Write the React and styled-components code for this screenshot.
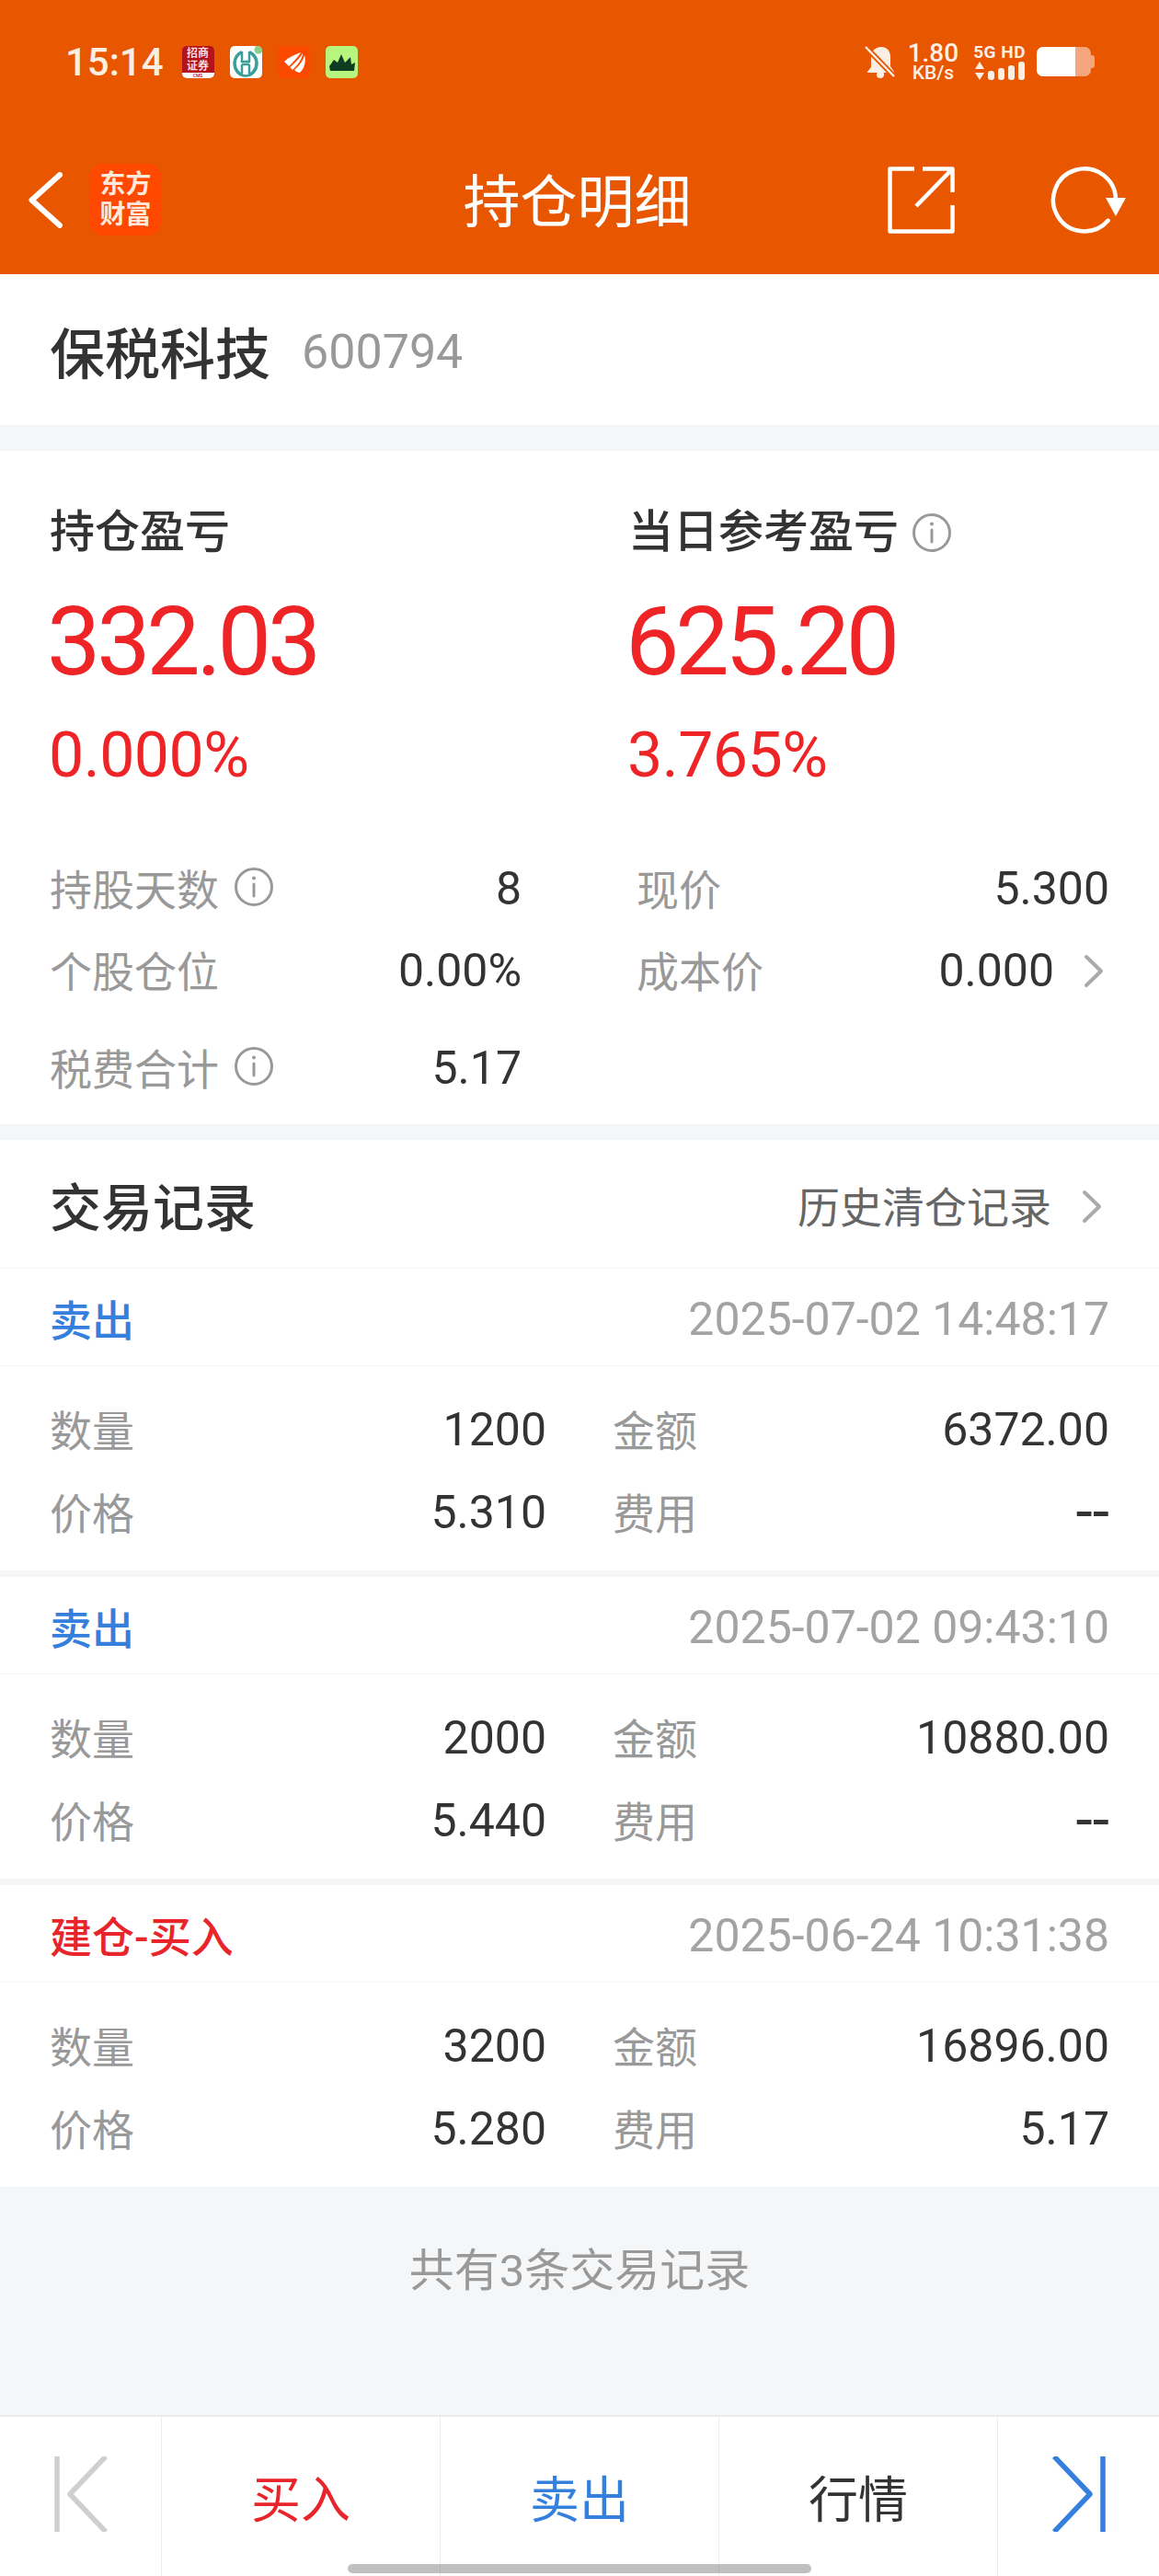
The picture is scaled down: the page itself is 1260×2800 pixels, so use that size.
import React from "react";
import styled, { createGlobalStyle } from "styled-components";

const GlobalStyle = createGlobalStyle`
  html, body {
    margin: 0;
    padding: 0;
    background: #f5f6f8;
    font-family: "Roboto", "Noto Sans CJK SC", sans-serif;
  }
  * { box-sizing: border-box; }
`;

const Page = styled.div`
  width: 1260px;
  height: 2800px;
  display: flex;
  flex-direction: column;
  overflow: hidden;
  background: #f5f6f8;
  position: relative;
`;

const Top = styled.div`
  height: 298px;
  background: #e85600;
  color: #fff;
  display: flex;
  flex-direction: column;
`;

const StatusBar = styled.div`
  height: 134px;
  padding: 0 70px 0 71px;
  display: flex;
  align-items: center;
  justify-content: space-between;
`;

const StatusLeft = styled.div`
  display: flex;
  align-items: center;
`;

const Clock = styled.span`
  font-size: 42px;
  font-weight: 500;
  color: #fdeee4;
  margin-right: 20px;
`;

const AppIcons = styled.div`
  display: flex;
  gap: 17px;
`;

const AppIcon = styled.div`
  width: 35px;
  height: 35px;
  border-radius: 5px;
  background: ${(p) => p.$bg};
  overflow: hidden;
  display: flex;
  align-items: center;
  justify-content: center;
`;

const BrokerIcon = styled(AppIcon)`
  flex-direction: column;
  justify-content: flex-start;
  color: #f6dede;
  font-size: 12px;
  line-height: 14px;
  font-weight: 700;
  padding-top: 1px;
  span { display: block; height: 14px; }
  b {
    display: block;
    width: 100%;
    height: 6px;
    background: #fff;
    color: #b3131b;
    font-size: 5px;
    line-height: 6px;
    font-weight: 500;
    text-align: center;
  }
`;

const StatusRight = styled.div`
  display: flex;
  align-items: center;
`;

const Speed = styled.div`
  display: flex;
  flex-direction: column;
  align-items: center;
  color: #fdeee4;
  line-height: 1;
  font-weight: 500;
  margin: 0 16px 0 14px;
  span:first-child { font-size: 28px; line-height: 24px; }
  span:last-child { font-size: 21px; line-height: 19px; }
`;

const Signal = styled.div`
  display: flex;
  flex-direction: column;
  align-items: flex-end;
  color: #fdeee4;
  margin-right: 12px;
  span { font-size: 19px; line-height: 20px; font-weight: 700; letter-spacing: 0.5px; }
`;

const Battery = styled.div`
  width: 63px;
  height: 32px;
  display: flex;
  align-items: center;
`;

const BatteryBody = styled.div`
  width: 59px;
  height: 32px;
  border-radius: 7px;
  background: #f5a67e;
  overflow: hidden;
  i { display: block; width: 42px; height: 32px; background: #fff; }
`;

const BatteryTip = styled.div`
  width: 4px;
  height: 14px;
  border-radius: 0 3px 3px 0;
  background: #f5a67e;
`;

const NavBar = styled.div`
  height: 164px;
  padding: 2px 36px 0 31px;
  display: grid;
  grid-template-columns: 1fr auto 1fr;
  align-items: center;
`;

const NavLeft = styled.div`
  display: flex;
  align-items: center;
`;

const Logo = styled.div`
  width: 77px;
  height: 78px;
  margin-left: 30px;
  border-radius: 14px;
  background: #ff4800;
  display: flex;
  flex-direction: column;
  align-items: center;
  justify-content: center;
  font-size: 28px;
  line-height: 33px;
  font-weight: 700;
  color: #ffe9dc;
`;

const NavTitle = styled.div`
  font-size: 62px;
  line-height: 1;
  padding-top: 7px;
`;

const NavIcons = styled.div`
  display: flex;
  align-items: center;
  justify-content: flex-end;
  gap: 104px;
`;

const NameRow = styled.div`
  height: 164px;
  background: #fff;
  padding: 0 54px;
  display: flex;
  align-items: center;
  gap: 34px;
`;

const StockName = styled.span`
  font-size: 60px;
  font-weight: 500;
  color: #333;
`;

const StockCode = styled.span`
  font-size: 52px;
  color: #999;
  padding-top: 4px;
`;

const Summary = styled.section`
  margin-top: 28px;
  height: 732px;
  background: #fff;
  padding: 61px 54px 0;
`;

const Profits = styled.div`
  display: grid;
  grid-template-columns: 629px 1fr;
`;

const ProfitLabel = styled.div`
  display: flex;
  align-items: center;
  gap: 14px;
  font-size: 49px;
  line-height: 56px;
  font-weight: 500;
  color: #333;
`;

const ProfitValue = styled.div`
  font-size: 104px;
  line-height: 120px;
  letter-spacing: -4.3px;
  margin: 31px 0 0 -3px;
  color: #ee2427;
`;

const ProfitRate = styled.div`
  font-size: 68px;
  line-height: 80px;
  letter-spacing: -0.5px;
  margin: 23px 0 0 -1px;
  color: #ee2427;
`;

const Stats = styled.div`
  display: grid;
  grid-template-columns: 513px 1fr;
  column-gap: 125px;
  margin-top: 60px;
`;

const StatRow = styled.div`
  display: flex;
  align-items: center;
  justify-content: space-between;
  height: ${(p) => p.$h || 89}px;
`;

const Muted = styled.div`
  display: flex;
  align-items: center;
  gap: 16px;
  font-size: 46px;
  color: #999;
  padding-bottom: 3px;
`;

const Val = styled.div`
  display: flex;
  align-items: center;
  font-size: ${(p) => (p.$dash ? 66 : 50)}px;
  color: #333;
  padding-top: 1px;
`;

const ChevronSlot = styled.span`
  width: 60px;
  padding-right: 6px;
  display: flex;
  justify-content: flex-end;
`;

const Trades = styled.section`
  margin-top: 17px;
  background: #fff;
  display: flex;
  flex-direction: column;
`;

const TradesHead = styled.div`
  height: 140px;
  padding: 0 62px 0 54px;
  border-bottom: 1px solid #f7f8f9;
  display: flex;
  align-items: center;
  justify-content: space-between;
`;

const TradesTitle = styled.div`
  font-size: 56px;
  font-weight: 500;
  color: #333;
`;

const HistoryLink = styled.div`
  display: flex;
  align-items: center;
  gap: 33px;
  font-size: 46px;
  color: #666;
  svg { margin-top: 6px; }
`;

const Record = styled.div`
  border-bottom: ${(p) => (p.$last ? "none" : "7px solid #f5f6f8")};
`;

const RecordHead = styled.div`
  height: 106px;
  padding: 0 54px;
  border-bottom: 1px solid #f5f6f7;
  display: flex;
  align-items: center;
  justify-content: space-between;
`;

const Side = styled.div`
  font-size: 46px;
  font-weight: 500;
  color: ${(p) => (p.$buy ? "#e8252b" : "#3580dc")};
`;

const Stamp = styled.div`
  font-size: 50px;
  color: #a3a3a3;
  padding-top: 4px;
`;

const RecordBody = styled.div`
  display: grid;
  grid-template-columns: 540px 1fr;
  column-gap: 72px;
  padding: 23px 54px 19px;
`;

const Cell = styled.div`
  height: 90px;
  display: flex;
  align-items: center;
  justify-content: space-between;
`;

const Foot = styled.div`
  flex: 1;
  padding-top: 51px;
  text-align: center;
  font-size: 49px;
  color: #999;
`;

const BottomBar = styled.nav`
  height: 175px;
  background: #fff;
  border-top: 2px solid #e9ebee;
  display: grid;
  grid-template-columns: 175px 303px 303px 303px 1fr;
`;

const BarItem = styled.div`
  border-left: ${(p) => (p.$first ? "none" : "1px solid #ececec")};
  display: flex;
  align-items: center;
  justify-content: center;
  font-size: 54px;
  color: ${(p) => p.$color || "#333"};
  svg { margin-top: -6px; }
`;

const HomeBar = styled.div`
  position: absolute;
  left: 378px;
  top: 2787px;
  width: 504px;
  height: 10px;
  border-radius: 5px;
  background: rgba(150, 150, 150, 0.6);
`;

function Info({ size = 44 }) {
  return (
    <svg width={size} height={size} viewBox="0 0 44 44" fill="none" stroke="#999" strokeWidth="3">
      <circle cx="22" cy="22" r="19.5" />
      <line x1="22" y1="19" x2="22" y2="32" strokeLinecap="round" />
      <circle cx="22" cy="12.5" r="2" fill="#999" stroke="none" />
    </svg>
  );
}

function Chevron() {
  return (
    <svg width="22" height="37" viewBox="0 0 22 37" fill="none" stroke="#aaa" strokeWidth="4" strokeLinecap="round" strokeLinejoin="round">
      <path d="M3 3 L19 18.5 L3 34" />
    </svg>
  );
}

function Stat({ label, info, value, chevron, h }) {
  return (
    <StatRow $h={h}>
      <Muted>
        {label}
        {info && <Info />}
      </Muted>
      <Val>
        {value}
        {chevron && <ChevronSlot><Chevron /></ChevronSlot>}
      </Val>
    </StatRow>
  );
}

const records = [
  { side: "卖出", time: "2025-07-02 14:48:17", qty: "1200", amount: "6372.00", price: "5.310", fee: "--" },
  { side: "卖出", time: "2025-07-02 09:43:10", qty: "2000", amount: "10880.00", price: "5.440", fee: "--" },
  { side: "建仓-买入", buy: true, time: "2025-06-24 10:31:38", qty: "3200", amount: "16896.00", price: "5.280", fee: "5.17", last: true },
];

export default function App() {
  return (
    <Page>
      <GlobalStyle />
      <Top>
        <StatusBar>
          <StatusLeft>
            <Clock>15:14</Clock>
            <AppIcons>
              <BrokerIcon $bg="#b3131b">
                <span>招商</span>
                <span>证券</span>
                <b>CMS</b>
              </BrokerIcon>
              <AppIcon $bg="#fff">
                <svg width="35" height="35" viewBox="0 0 35 35" fill="none">
                  <ellipse cx="17" cy="19" rx="12" ry="13" stroke="#3a9e9a" strokeWidth="3.5" />
                  <path d="M17 4v27" stroke="#fff" strokeWidth="9" />
                  <path d="M13 6v11h8V6M13 20h8M13 20v11M21 20v11" stroke="#3a9e9a" strokeWidth="2.5" />
                  <circle cx="31" cy="4" r="4.5" fill="#8ccf8a" />
                </svg>
              </AppIcon>
              <AppIcon $bg="#fb4a00">
                <svg width="35" height="35" viewBox="0 0 35 35" fill="#fff">
                  <path d="M7 17C12 12 19 9 25 7C22 12 16 18 12 22Z" />
                  <path d="M27 8C27 14 21 21 16 26C15 25 14 24 13.5 23C19 18 24 13 27 8Z" />
                  <path d="M29 10C31 17 29 24 24 29C22 29 19 27 18 26C24 21 28 15 29 10Z" />
                </svg>
              </AppIcon>
              <AppIcon $bg="#b6f57e">
                <svg width="35" height="35" viewBox="0 0 35 35" fill="#0f3d22">
                  <path d="M4 22L9 15L13 18L17 9L21 18L27 12L28 20L32 18L31 27L5 27Z" />
                </svg>
              </AppIcon>
            </AppIcons>
          </StatusLeft>
          <StatusRight>
            <svg width="33" height="35" viewBox="0 0 33 35" fill="#fdeee4">
              <path d="M18 1c7 0 10 5 10 11v10l4 6v1H3v-1l4-5V12C7 6 11 1 18 1z" />
              <circle cx="17" cy="31" r="4" />
              <line x1="1" y1="1" x2="32" y2="33" stroke="#e85600" strokeWidth="6" />
              <line x1="1" y1="1" x2="32" y2="33" stroke="#fdeee4" strokeWidth="2.5" />
            </svg>
            <Speed>
              <span>1.80</span>
              <span>KB/s</span>
            </Speed>
            <Signal>
              <span>5G HD</span>
              <svg width="56" height="20" viewBox="0 0 56 20" fill="#fdeee4">
                <path d="M6 0l5 8H1zM6 20l5-8H1z" />
                <rect x="15" y="10" width="7" height="10" rx="3" />
                <rect x="26" y="7" width="7" height="13" rx="3" />
                <rect x="37" y="4" width="7" height="16" rx="3" />
                <rect x="48" y="0" width="7" height="20" rx="3" />
              </svg>
            </Signal>
            <Battery>
              <BatteryBody><i /></BatteryBody>
              <BatteryTip />
            </Battery>
          </StatusRight>
        </StatusBar>
        <NavBar>
          <NavLeft>
            <svg width="37" height="61" viewBox="0 0 37 61" fill="none" stroke="#fff" strokeWidth="6" strokeLinecap="round" strokeLinejoin="round">
              <path d="M34 3 L3.5 30.5 L34 58" />
            </svg>
            <Logo>
              <span>东方</span>
              <span>财富</span>
            </Logo>
          </NavLeft>
          <NavTitle>持仓明细</NavTitle>
          <NavIcons>
            <svg width="73" height="73" viewBox="0 0 73 73" fill="none" stroke="#fff" strokeWidth="4.5" strokeLinejoin="round">
              <path d="M29 2.5H2.5v68h68V42" />
              <path d="M38 2.5h32.5V28" />
              <path d="M70 3L31 43" />
            </svg>
            <svg width="82" height="73" viewBox="0 0 82 73" fill="none" stroke="#fff" strokeWidth="4.5" strokeLinecap="round">
              <path d="M62.6 58.8A34 34 0 1 1 71 36.5" />
              <path d="M60 34h22l-11 20z" fill="#fff" stroke="none" />
            </svg>
          </NavIcons>
        </NavBar>
      </Top>

      <NameRow>
        <StockName>保税科技</StockName>
        <StockCode>600794</StockCode>
      </NameRow>

      <Summary>
        <Profits>
          <div>
            <ProfitLabel>持仓盈亏</ProfitLabel>
            <ProfitValue>332.03</ProfitValue>
            <ProfitRate>0.000%</ProfitRate>
          </div>
          <div>
            <ProfitLabel>当日参考盈亏 <Info /></ProfitLabel>
            <ProfitValue>625.20</ProfitValue>
            <ProfitRate>3.765%</ProfitRate>
          </div>
        </Profits>
        <Stats>
          <Stat label="持股天数" info value="8" />
          <Stat label="现价" value="5.300" />
          <Stat label="个股仓位" value="0.00%" />
          <Stat label="成本价" value="0.000" chevron />
          <Stat label="税费合计" info value="5.17" h={122} />
        </Stats>
      </Summary>

      <Trades>
        <TradesHead>
          <TradesTitle>交易记录</TradesTitle>
          <HistoryLink>历史清仓记录<Chevron /></HistoryLink>
        </TradesHead>
        {records.map((r) => (
          <Record key={r.time} $last={r.last}>
            <RecordHead>
              <Side $buy={r.buy}>{r.side}</Side>
              <Stamp>{r.time}</Stamp>
            </RecordHead>
            <RecordBody>
              <Cell><Muted>数量</Muted><Val>{r.qty}</Val></Cell>
              <Cell><Muted>金额</Muted><Val>{r.amount}</Val></Cell>
              <Cell><Muted>价格</Muted><Val>{r.price}</Val></Cell>
              <Cell><Muted>费用</Muted><Val $dash={r.fee === "--"}>{r.fee}</Val></Cell>
            </RecordBody>
          </Record>
        ))}
      </Trades>

      <Foot>共有3条交易记录</Foot>

      <BottomBar>
        <BarItem $first>
          <svg width="58" height="82" viewBox="0 0 58 82" fill="none" stroke="#cfcfcf" strokeWidth="5.5" strokeLinejoin="round">
            <path d="M3 0v82M56 0 L17 41 L56 82" />
          </svg>
        </BarItem>
        <BarItem $color="#e8252b">买入</BarItem>
        <BarItem $color="#3580dc">卖出</BarItem>
        <BarItem>行情</BarItem>
        <BarItem>
          <svg width="58" height="82" viewBox="0 0 58 82" fill="none" stroke="#3580dc" strokeWidth="5.5" strokeLinejoin="round">
            <path d="M55 0v82M2 0 L41 41 L2 82" />
          </svg>
        </BarItem>
      </BottomBar>
      <HomeBar />
    </Page>
  );
}
